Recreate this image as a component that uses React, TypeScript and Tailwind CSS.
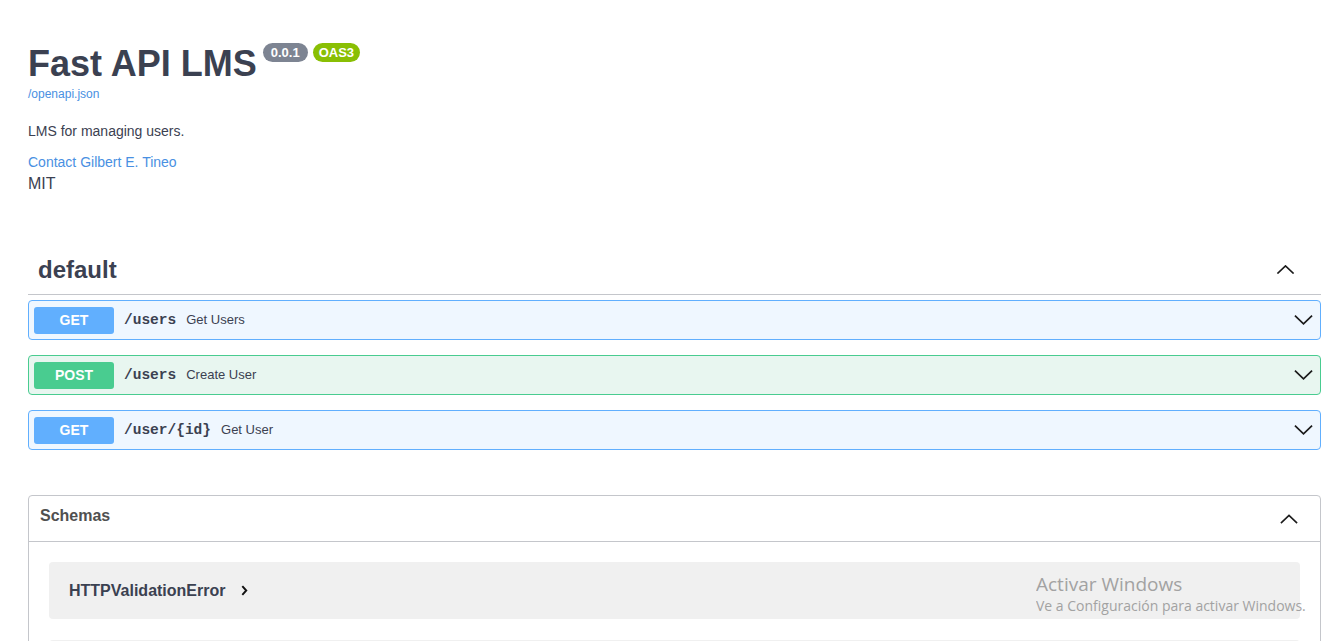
import React from "react";

const sans = "font-['Liberation_Sans',Arial,sans-serif]";

function ChevronUp({ className }: { className?: string }) {
  return (
    <svg viewBox="0 0 20 10" className={className} fill="none" stroke="currentColor" strokeWidth="1.8">
      <path d="M1 9.5 L10 1 L19 9.5" />
    </svg>
  );
}

function ChevronDown({ className }: { className?: string }) {
  return (
    <svg viewBox="0 0 20 10" className={className} fill="none" stroke="currentColor" strokeWidth="1.8">
      <path d="M1 0.5 L10 9 L19 0.5" />
    </svg>
  );
}

type Op = { method: "GET" | "POST"; path: string; summary: string };

const ops: Op[] = [
  { method: "GET", path: "/users", summary: "Get Users" },
  { method: "POST", path: "/users", summary: "Create User" },
  { method: "GET", path: "/user/{id}", summary: "Get User" },
];

function Operation({ op }: { op: Op }) {
  const isGet = op.method === "GET";
  return (
    <div
      className={
        "mb-[15px] flex h-[40px] items-center rounded-[4px] border px-[5px] " +
        (isGet ? "border-[#61affe] bg-[#eff7ff]" : "border-[#49cc90] bg-[#e8f6f0]")
      }
    >
      <span
        className={
          "flex h-[27px] w-[80px] items-center justify-center rounded-[3px] text-[14px] font-bold text-white " +
          (isGet ? "bg-[#61affe]" : "bg-[#49cc90]")
        }
      >
        {op.method}
      </span>
      <span className="ml-[10px] pt-[2px] font-['Liberation_Mono',monospace] text-[14.5px] font-bold text-[#3b4151]">
        {op.path}
      </span>
      <span className="ml-[10px] text-[13px] text-[#3b4151]">{op.summary}</span>
      <ChevronDown className="ml-auto mr-[2px] h-[10px] w-[19px] text-[#1b1b1b]" />
    </div>
  );
}

export default function App() {
  return (
    <div className={"relative min-h-[641px] bg-white pl-[28px] pr-[19px] " + sans}>
      <div className="pt-[41px]">
        <div className="flex items-start">
          <h1 className="text-[36px] font-bold leading-[45px] text-[#3b4151]">Fast API LMS</h1>
          <span className="ml-[6px] mt-[2px] rounded-[10px] bg-[#7d8492] px-[8px] py-[2px] text-[13px] font-bold leading-[15px] text-white">
            0.0.1
          </span>
          <span className="ml-[5px] mt-[2px] rounded-[10px] bg-[#89bf04] px-[6px] py-[2px] text-[13px] font-bold leading-[15px] text-white">
            OAS3
          </span>
        </div>
        <a className="block text-[12px] leading-[16px] text-[#4990e2]">/openapi.json</a>
        <p className="mt-[20px] text-[14px] leading-[18px] text-[#3b4151]">LMS for managing users.</p>
        <a className="mt-[13px] block text-[14px] leading-[18px] text-[#4990e2]">Contact Gilbert E. Tineo</a>
        <p className="mt-[3px] text-[16px] leading-[20px] text-[#3b4151]">MIT</p>
      </div>

      <div className="mt-[51px]">
        <div className="flex h-[50px] items-center border-b border-[#c4c6cb] pl-[10px] pr-[26px]">
          <h3 className="text-[24px] font-bold text-[#3b4151]">default</h3>
          <ChevronUp className="ml-auto h-[9px] w-[19px] text-[#1b1b1b]" />
        </div>
        <div className="pt-[5px]">
          {ops.map((op, i) => (
            <Operation key={i} op={op} />
          ))}
        </div>
      </div>

      <div className="mt-[45px] rounded-[4px] border border-[#c4c6cb]">
        <div className="flex h-[46px] items-center border-b border-[#c4c6cb] pb-[6px] pl-[11px] pr-[22px]">
          <h4 className="text-[16px] font-bold text-[#505050]">Schemas</h4>
          <ChevronUp className="ml-auto mt-[6px] h-[10px] w-[18px] text-[#1b1b1b]" />
        </div>
        <div className="px-[20px] pt-[20px]">
          <div className="flex h-[57px] items-center rounded-[4px] bg-[#f0f0f0] pl-[20px]">
            <span className="text-[16px] font-bold text-[#3b4151]">HTTPValidationError</span>
            <svg viewBox="0 0 8 12" className="ml-[16px] h-[11px] w-[7px]" fill="none" stroke="#111" strokeWidth="2.2">
              <path d="M1.5 1 L6 6 L1.5 11" />
            </svg>
          </div>
          <div className="mt-[21px] h-[20px] rounded-[4px] bg-[#f0f0f0]" />
        </div>
      </div>

      <div className="pointer-events-none absolute left-[1036px] top-[571px] font-['Open_Sans','Noto_Sans',sans-serif] text-[#9a9a9a] opacity-90">
        <div className="text-[19px] leading-[26px]">Activar Windows</div>
        <div className="text-[14px] leading-[18px]">Ve a Configuración para activar Windows.</div>
      </div>
    </div>
  );
}
